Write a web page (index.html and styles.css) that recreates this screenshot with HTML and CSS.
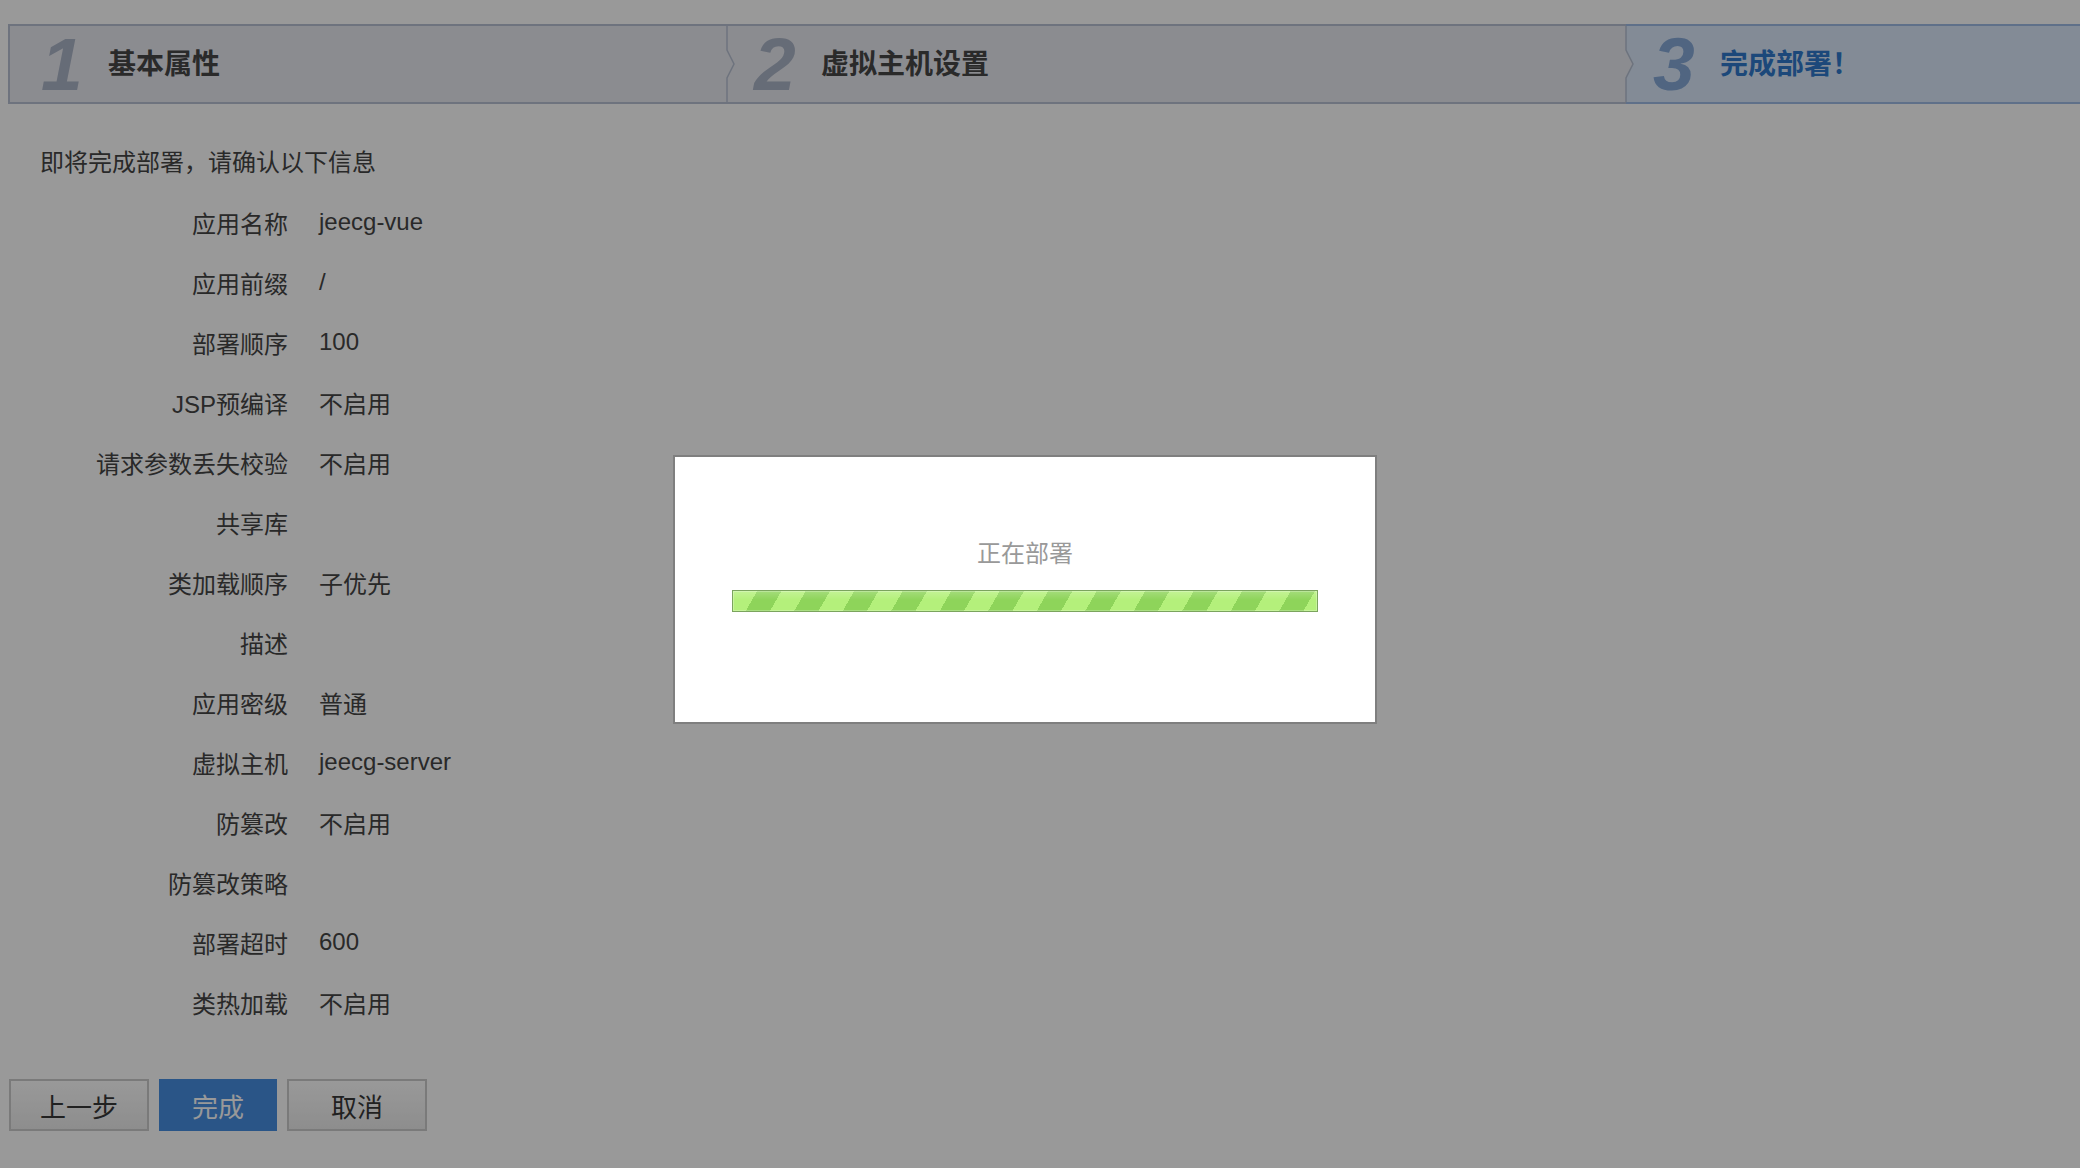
FILE: index.html
```html
<!DOCTYPE html>
<html lang="zh-CN">
<head>
<meta charset="utf-8">
<title>部署</title>
<link rel="stylesheet" href="styles.css">
</head>
<body>
<div class="page">
  <div class="steps">
    <div class="step step-first">
      <span class="step-num">1</span><span class="step-title">基本属性</span>
    </div>
    <div class="step step-second">
      <svg class="step-notch" viewBox="0 0 10 76" width="10" height="76"><polygon points="0,24 8,38 0,52" fill="#e8e9f0"/><polyline points="1,0 1,24 8,38 1,52 1,76" fill="none" stroke="#b7c0d2" stroke-width="1.5"/></svg>
      <span class="step-num">2</span><span class="step-title">虚拟主机设置</span>
    </div>
    <div class="step step-active">
      <svg class="step-notch" viewBox="0 0 10 76" width="10" height="76"><polygon points="0,24 8,38 0,52" fill="#e8e9f0"/><polyline points="1,0 1,24 8,38 1,52 1,76" fill="none" stroke="#b7c0d2" stroke-width="1.5"/></svg>
      <span class="step-num">3</span><span class="step-title">完成部署！</span>
    </div>
  </div>

  <p class="intro">即将完成部署，请确认以下信息</p>

  <dl class="info">
    <dt>应用名称</dt><dd>jeecg-vue</dd>
    <dt>应用前缀</dt><dd>/</dd>
    <dt>部署顺序</dt><dd>100</dd>
    <dt>JSP预编译</dt><dd>不启用</dd>
    <dt>请求参数丢失校验</dt><dd>不启用</dd>
    <dt>共享库</dt><dd></dd>
    <dt>类加载顺序</dt><dd>子优先</dd>
    <dt>描述</dt><dd></dd>
    <dt>应用密级</dt><dd>普通</dd>
    <dt>虚拟主机</dt><dd>jeecg-server</dd>
    <dt>防篡改</dt><dd>不启用</dd>
    <dt>防篡改策略</dt><dd></dd>
    <dt>部署超时</dt><dd>600</dd>
    <dt>类热加载</dt><dd>不启用</dd>
  </dl>

  <div class="actions">
    <button class="btn">上一步</button>
    <button class="btn btn-primary">完成</button>
    <button class="btn">取消</button>
  </div>
</div>

<div class="mask"></div>
<div class="modal">
  <div class="modal-text">正在部署</div>
  <div class="progress"></div>
</div>
</body>
</html>
```

FILE: styles.css
```css
* { box-sizing: border-box; }
html, body { margin: 0; padding: 0; }
body {
  width: 2080px;
  height: 1168px;
  overflow: hidden;
  position: relative;
  background: #ffffff;
  color: #454545;
  font-family: "Liberation Sans", "Noto Sans CJK SC", sans-serif;
}
.page { padding: 24px 0 0 8px; }

/* steps */
.steps { display: flex; height: 80px; }
.step {
  position: relative;
  display: flex;
  align-items: center;
  background: #e8e9f0;
  border-top: 2px solid #b7c0d2;
  border-bottom: 2px solid #b7c0d2;
  padding-left: 27px;
}
.step-first { width: 719px; border-left: 2px solid #b7c0d2; padding-left: 31px; }
.step-second { width: 899px; }
.step-active { flex: 1; background: #dae8fa; border-color: #9ebbe4; }
.step-notch { position: absolute; left: -1px; top: 0; }
.step-num {
  font-family: "Liberation Sans", sans-serif;
  font-style: italic;
  font-weight: 700;
  font-size: 75px;
  line-height: 1;
  color: #aab4c6;
  width: 67px;
}
.step-title { font-size: 28px; font-weight: 700; color: #474747; margin-bottom: 5px; }
.step-active .step-num { color: #86a9d8; }
.step-active .step-title { color: #2f79cb; }

/* info */
.intro { margin: 41px 0 0 32px; font-size: 24px; line-height: 36px; }
.info {
  display: grid;
  grid-template-columns: 280px auto;
  grid-auto-rows: 60px;
  column-gap: 31px;
  align-items: center;
  margin: 11px 0 0;
  font-size: 24px;
}
.info dt { text-align: right; }
.info dd { margin: 0; }

/* buttons */
.actions { display: flex; gap: 10px; margin: 47px 0 0 1px; }
.btn {
  width: 140px;
  height: 52px;
  font-family: inherit;
  font-size: 26px;
  color: #383838;
  border: 2px solid #cbcbcb;
  background: linear-gradient(#ffffff, #ececec);
  padding: 0;
}
.btn-primary { width: 118px; background: #468ee1; border-color: #468ee1; color: #ffffff; }

/* mask + modal */
.mask { position: fixed; inset: 0; background: rgba(0, 0, 0, 0.4); }
.modal {
  position: fixed;
  left: 673px;
  top: 455px;
  width: 704px;
  height: 269px;
  background: #ffffff;
  border: 2px solid #7f7f7f;
  display: flex;
  flex-direction: column;
  align-items: center;
  padding-top: 81px;
}
.modal-text { font-size: 24px; line-height: 32px; color: #999999; }
.progress {
  width: 586px;
  height: 22px;
  margin-top: 20px;
  border: 1px solid #7ba45e;
  box-shadow: inset 0 0 0 1px rgba(255, 255, 255, 0.25);
  background:
    linear-gradient(rgba(255, 255, 255, 0.2), rgba(255, 255, 255, 0) 45%),
    repeating-linear-gradient(120deg, #b4f07b 0 21px, #8ed45a 21px 42px);
}
```
